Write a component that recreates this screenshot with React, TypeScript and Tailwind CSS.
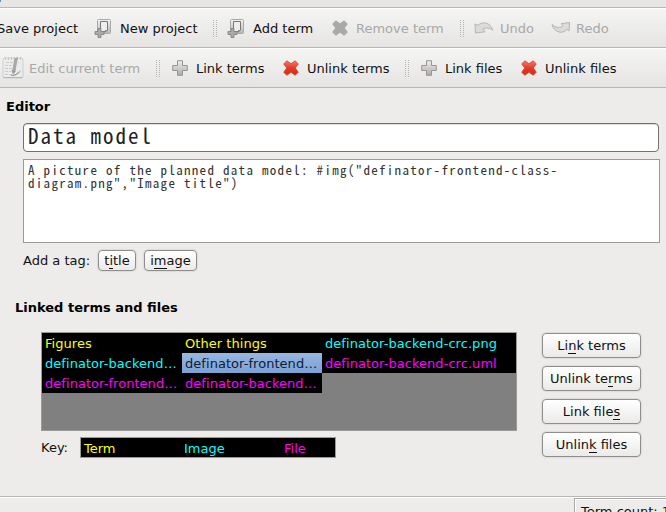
import type { ReactNode } from "react";

function AddBoxIcon() {
  return (
    <svg width="18" height="20" viewBox="0 0 18 20" className="block">
      <defs>
        <linearGradient id="frame" x1="0" y1="0" x2="0" y2="1">
          <stop offset="0" stopColor="#f4f4f4" />
          <stop offset="1" stopColor="#b5b5b5" />
        </linearGradient>
      </defs>
      <path d="M4.500 1.500h11q1 0 1 1v12q0 1-1 1h-11q-1 0-1-1v-12q0-1 1-1z" fill="url(#frame)" stroke="#a9a9a9" />
      <path d="M6.500 3.500h7v8.500l-2 1.500H6.500z" fill="#eee" stroke="#777" />
      <path d="M14 12l-3 2.500v-2.500z" fill="#888" />
      <path d="M4 10.500h3v3h3v3H7v3H4v-3H1v-3h3z" fill="#aaa" stroke="#858585" strokeWidth=".9" />
    </svg>
  );
}

function PlusIcon() {
  return (
    <svg width="16" height="16" viewBox="0 0 16 16" className="block">
      <defs>
        <linearGradient id="plus" x1="0" y1="0" x2="0" y2="1">
          <stop offset="0" stopColor="#efefef" />
          <stop offset="1" stopColor="#aaa" />
        </linearGradient>
      </defs>
      <path d="M5.500 .7h5v4.800h4.800v5h-4.800v4.800h-5v-4.800H.7v-5h4.800z" fill="url(#plus)" stroke="#969696" strokeLinejoin="round" />
    </svg>
  );
}

function CrossIcon({ off = false }: { off?: boolean }) {
  return (
    <svg width="16" height="16" viewBox="0 0 16 16" className="block">
      <defs>
        <linearGradient id="red" x1="0" y1="0" x2="0" y2="1">
          <stop offset="0" stopColor="#f47b6b" />
          <stop offset=".5" stopColor="#e53b27" />
          <stop offset="1" stopColor="#d42a12" />
        </linearGradient>
      </defs>
      <path
        d="M3.800 .8L8 3.700 12.200 .8 15.300 4 12.300 8 15.300 12.200 12.200 15.300 8 12.300 3.800 15.300.7 12.200 3.700 8 .7 4z"
        fill={off ? "#a9a9a9" : "url(#red)"}
        stroke={off ? "#a3a3a3" : "#c94432"}
        strokeWidth=".8"
        strokeLinejoin="round"
      />
    </svg>
  );
}

function NotebookIcon() {
  return (
    <svg width="22" height="23" viewBox="0 0 22 23" className="block">
      <rect x="1" y="2" width="20" height="20" rx="2" fill="#ececec" stroke="#cfcfcf" />
      <path d="M1.500 21.500h19" stroke="#b5b5b5" />
      <path d="M3 2.500h17" stroke="#c4c4c4" strokeWidth="2.500" strokeDasharray="1 2" />
      <path d="M4 6.500h13M3 9.500h8M3 12.500h8M3 15.500h6M3 18.500h7" stroke="#cacaca" strokeDasharray="3 1" />
      <path d="M16 1l-2.500 14-2 1.500-1.500-1 2.500-13z" fill="#a8a8a8" />
      <path d="M9 19c3 0 7-2 10-5-2 4-5 6-10 6zM9.500 14l4.500 1-3 3.500z" fill="#9b9b9b" />
    </svg>
  );
}

function UndoIcon() {
  return (
    <svg width="20" height="14" viewBox="0 0 20 14" className="block">
      <path d="M1 3l3 1.300C8 .5 16 .5 18.800 9.300 16 7 12 6.200 8.800 8L11 10.800 1.500 12z" fill="#dcdbda" stroke="#b5b4b3" strokeLinejoin="round" />
    </svg>
  );
}

function RedoIcon() {
  return (
    <svg width="20" height="14" viewBox="0 0 20 14" className="block">
      <path d="M18.500 1.500l-8.500 1.200 2 1.800C9.500 7.500 5 7 1 3.500 3 11 11 14 16 8.300l2 1.700z" fill="#dcdbda" stroke="#b5b4b3" strokeLinejoin="round" />
    </svg>
  );
}

function Handle() {
  return (
    <svg width="5" height="18" viewBox="0 0 5 18" className="block shrink-0">
      {[1, 3, 5, 7, 9, 11, 13, 15, 17].map((y) => (
        <g key={y} fill="#b4b3b2">
          <rect x="0" y={y} width="1" height="1" />
          <rect x="3" y={y} width="1" height="1" />
        </g>
      ))}
    </svg>
  );
}

function Tool({ icon, label, box, off = false }: { icon: ReactNode; label: string; box: string; off?: boolean }) {
  return (
    <div className={`flex shrink-0 items-center whitespace-nowrap ${box} ${off ? "text-[#a9a8a7]" : ""}`}>
      {icon}
      <span className="pt-0.5">{label}</span>
    </div>
  );
}

function Btn({ children, box }: { children: ReactNode; box: string }) {
  return (
    <button
      className={`flex items-center justify-center rounded-[4px] border border-[#8f8e8d] bg-linear-to-b from-white to-[#ebeae9] whitespace-nowrap shadow-[0_0_1px_1px_#dedddb] ${box}`}
    >
      <span>{children}</span>
    </button>
  );
}

function Key({ children }: { children: string }) {
  return <span className="inline-block h-[14px] leading-[14px] shadow-[0_1px_0_0_#111]">{children}</span>;
}

const bar = "flex h-10 w-[666px] items-center border-b border-[#b9b8b7] bg-linear-to-b from-[#f5f5f4] to-[#e5e4e3] shadow-[inset_0_1px_0_#fff]";

export default function App() {
  return (
    <div className="flex h-[512px] w-[666px] flex-col overflow-hidden bg-[#edecea] font-['DejaVu_Sans',sans-serif] text-[13px] leading-[16px] text-[#111]">
      <div className="h-2 shrink-0 overflow-hidden border-b border-[#b9b8b7] bg-[#e7e6e4]">
        <div className="-mt-[13px] -ml-[2px]">p</div>
      </div>

      <div className={`${bar} shrink-0`}>
        <span className="-ml-[3px] w-[97px] shrink-0 pt-0.5 whitespace-nowrap">Save project</span>
        <Tool icon={<AddBoxIcon />} label="New project" box="w-[119px] gap-2" />
        <Handle />
        <Tool icon={<AddBoxIcon />} label="Add term" box="ml-[9px] w-[105px] gap-2" />
        <Tool icon={<CrossIcon off />} label="Remove term" box="w-[128px] gap-2" off />
        <Handle />
        <Tool icon={<UndoIcon />} label="Undo" box="ml-[9px] w-[77px] gap-[6px]" off />
        <Tool icon={<RedoIcon />} label="Redo" box="gap-[5px]" off />
      </div>
      <div className={`${bar} shrink-0`}>
        <Tool icon={<NotebookIcon />} label="Edit current term" box="ml-[2px] w-[154px] gap-[5px]" off />
        <Handle />
        <Tool icon={<PlusIcon />} label="Link terms" box="ml-[11px] w-[111px] gap-2" />
        <Tool icon={<CrossIcon />} label="Unlink terms" box="w-[122px] gap-2" />
        <Handle />
        <Tool icon={<PlusIcon />} label="Link files" box="ml-[11px] w-[100px] gap-2" />
        <Tool icon={<CrossIcon />} label="Unlink files" box="gap-2" />
      </div>

      <h2 className="mt-[11px] ml-[6px] shrink-0 font-bold text-black">Editor</h2>
      <div className="mt-2 ml-[23px] flex h-[29px] w-[636px] shrink-0 items-center rounded-[4px] border border-[#73716f] bg-white pl-1 font-['Noto_Sans_Mono_CJK_SC','DejaVu_Sans_Mono',monospace] text-[21px] tracking-[2px] whitespace-pre text-[#222] shadow-[inset_0_1px_0_#ddd]">
        <span className="-mt-[5px]">Data model</span>
      </div>
      <div className="mt-[7px] ml-[23px] h-[84px] w-[637px] shrink-0 border border-[#9b9997] bg-white pt-[3px] pl-1 font-['Noto_Sans_Mono_CJK_SC','DejaVu_Sans_Mono',monospace] text-[13px] leading-[13px] tracking-[1.3px] whitespace-pre text-[#333]">
        {'A picture of the planned data model: #img("definator-frontend-class-\ndiagram.png","Image title")'}
      </div>
      <div className="mt-[7px] ml-[23px] flex h-[21px] shrink-0 items-center">
        <span className="w-[75px]">Add a tag:</span>
        <Btn box="h-[21px] w-[38px]">t<Key>i</Key>tle</Btn>
        <Btn box="ml-2 h-[21px] w-[53px]">i<Key>m</Key>age</Btn>
      </div>
      <h2 className="mt-[29px] ml-[15px] shrink-0 font-bold text-black">Linked terms and files</h2>

      <div className="mt-4 ml-[41px] flex h-[126px] shrink-0">
        <div className="w-[501px]">
          <div className="h-[99px] w-[476px] border border-[#9b9997] bg-[#808080]">
            <div className="grid auto-rows-[20px] grid-cols-[140px_140px_194px] leading-[20px] tracking-[0.05px] whitespace-nowrap *:pt-px *:pl-[3px]">
              <div className="bg-black text-[#ff0]">Figures</div>
              <div className="bg-black text-[#ff0]">Other things</div>
              <div className="bg-black text-[#0ff]">definator-backend-crc.png</div>
              <div className="bg-black text-[#0ff]">definator-backend…</div>
              <div className="bg-linear-to-b from-[#98b7e2] to-[#7ba1d5] text-[#101a33]">definator-frontend…</div>
              <div className="bg-black text-[#f0f]">definator-backend-crc.uml</div>
              <div className="bg-black text-[#f0f]">definator-frontend…</div>
              <div className="bg-black text-[#f0f]">definator-backend…</div>
            </div>
          </div>
          <div className="mt-[6px] flex h-[21px] items-center">
            <span className="w-[39px]">Key:</span>
            <div className="grid h-[21px] w-[256px] grid-cols-[100px_100px_54px] border border-[#9b9997] bg-black leading-[21px] *:pl-[3px]">
              <span className="text-[#ff0]">Term</span>
              <span className="text-[#0ff]">Image</span>
              <span className="text-[#f0f]">File</span>
            </div>
          </div>
        </div>
        <div className="mt-px flex flex-col gap-2">
          <Btn box="h-[25px] w-[99px]">Li<Key>n</Key>k terms</Btn>
          <Btn box="h-[25px] w-[99px]">Unlink te<Key>r</Key>ms</Btn>
          <Btn box="h-[25px] w-[99px]">Link file<Key>s</Key></Btn>
          <Btn box="h-[25px] w-[99px]">Unlin<Key>k</Key> files</Btn>
        </div>
      </div>

      <div className="mt-[38px] flex h-[16px] shrink-0 border-t border-[#b9b8b7] pt-px shadow-[inset_0_1px_0_#fff]">
        <div className="ml-[574px] h-6 w-[120px] border-t border-l border-[#a9a8a7] pt-[5px] pl-[6px] whitespace-nowrap shadow-[inset_1px_1px_0_#fff]">Term count: 10</div>
      </div>
    </div>
  );
}
